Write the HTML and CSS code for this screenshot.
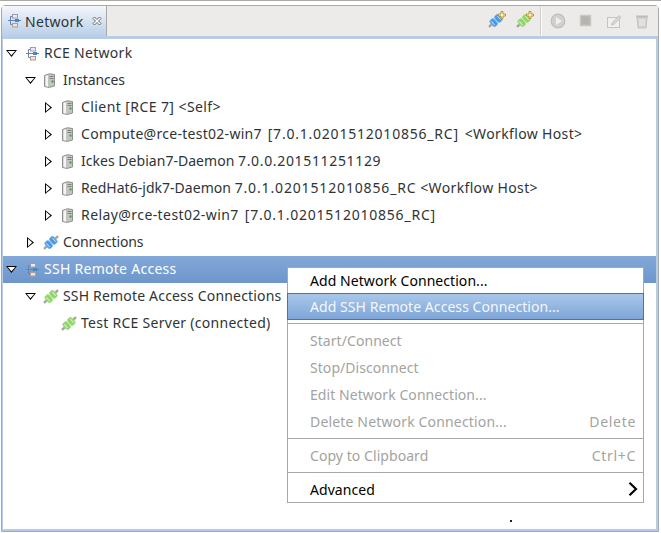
FILE: index.html
```html
<!DOCTYPE html>
<html lang="en">
<head>
  <meta charset="UTF-8" />
  <title>Network</title>
  <link rel="stylesheet" href="styles.css">
</head>
<body>

<svg class="defs" width="0" height="0">
  <symbol id="net" viewBox="0 0 16 16">
    <path d="M2 7.500H15" stroke="#5f86b8" fill="none"/>
    <path d="M4.500 3.500V11.500M4.500 3.500H6M4.500 11.500H6" stroke="#5f86b8" fill="none"/>
    <rect x="6.500" y="1.500" width="5" height="3.500" fill="#eceaf0" stroke="#a09cb0"/>
    <rect x="6.500" y="10.500" width="5" height="3.500" fill="#f0e2da" stroke="#b09c94"/>
    <rect x="9.500" y="6.500" width="3" height="2" fill="#3f8fd0" stroke="#4a84b8"/>
  </symbol>
  <symbol id="server" viewBox="0 0 16 16">
    <path d="M1.500 2.500Q6 -0.500 11.500 1.500V13Q6 15.500 1.500 13.500Z" fill="#c4c5c1" stroke="#8e908c"/>
    <path d="M2.500 3V13L5 13.800V2Z" fill="#f4f4f2"/>
    <path d="M6.500 3.500H10.500M6.500 5.500H10.500" stroke="#80827e" fill="none"/>
    <rect x="8.500" y="7.500" width="2" height="2" fill="#3c9a4a"/>
  </symbol>
  <symbol id="plug-blue" viewBox="0 0 16 16">
    <g transform="rotate(-42 8 7.500)">
      <path d="M-1.500 7.500H3M13 7.500H17.500" stroke="#a2a4a0" stroke-width="2.400" fill="none"/>
      <path d="M7 7.500H9" stroke="#d8e8f8" stroke-width="3" fill="none"/>
      <rect x="2.200" y="3.400" width="5.300" height="8.200" rx="2" fill="#4a97e4" stroke="#7fb6ee" stroke-width="0.800"/>
      <rect x="8.500" y="3.400" width="5.300" height="8.200" rx="2" fill="#4a97e4" stroke="#7fb6ee" stroke-width="0.800"/>
      <path d="M4 5V10M12 5V10" stroke="#bcdcf8" fill="none"/>
    </g>
  </symbol>
  <symbol id="plug-green" viewBox="0 0 16 16">
    <g transform="rotate(-42 8 7.500)">
      <path d="M-1.500 7.500H3M13 7.500H17.500" stroke="#a2a4a0" stroke-width="2.400" fill="none"/>
      <path d="M7 7.500H9" stroke="#eef9e6" stroke-width="3" fill="none"/>
      <rect x="2.200" y="3.400" width="5.300" height="8.200" rx="2" fill="#8ed468" stroke="#a9e08c" stroke-width="0.800"/>
      <rect x="8.500" y="3.400" width="5.300" height="8.200" rx="2" fill="#8ed468" stroke="#a9e08c" stroke-width="0.800"/>
      <path d="M4 5V10M12 5V10" stroke="#dff5cf" fill="none"/>
    </g>
  </symbol>
  <symbol id="spark" viewBox="0 0 8 8">
    <path d="M3 0.500H5V3H7.500V5H5V7.500H3V5H0.500V3H3Z" fill="#fbf3c8" stroke="#b8962e"/>
  </symbol>
</svg>

<div class="view">
  <div class="tabbar">
    <div class="tab">
      <svg class="ico"><use href="#net"/></svg>
      <span class="tab-title">Network</span>
      <svg class="tab-close" viewBox="0 0 10 10">
        <path d="M1 2.500L2.500 1L5 3.500L7.500 1L9 2.500L6.500 5L9 7.500L7.500 9L5 6.500L2.500 9L1 7.500L3.500 5Z" fill="#fff" stroke="#55575a" stroke-width="0.900"/>
      </svg>
    </div>
    <div class="toolbar">
      <span class="tool">
        <svg class="ico"><use href="#plug-blue"/></svg>
        <svg class="spark"><use href="#spark"/></svg>
      </span>
      <span class="tool">
        <svg class="ico"><use href="#plug-green"/></svg>
        <svg class="spark"><use href="#spark"/></svg>
      </span>
      <span class="tool-sep"></span>
      <svg class="tool" viewBox="0 0 16 16">
        <circle cx="8" cy="8" r="6.800" fill="#d0d0cc" stroke="#bdbdb9" stroke-width="1.200"/>
        <path d="M6 4L12 8L6 12Z" fill="#f0f0ee"/>
      </svg>
      <svg class="tool" viewBox="0 0 16 16">
        <rect x="2.500" y="2.500" width="10" height="10" fill="#b4b4b0" stroke="#c8c8c4" stroke-width="1.500"/>
      </svg>
      <svg class="tool" viewBox="0 0 16 16">
        <rect x="1.500" y="4.500" width="12" height="10" fill="#f0f0ee" stroke="#c4c4c0"/>
        <path d="M6 10L13 2.500L15 4.200L8 11.500L5.500 12Z" fill="#d8d8d4" stroke="#bcbcb8" stroke-width="0.800"/>
      </svg>
      <svg class="tool" viewBox="0 0 16 16">
        <path d="M2 3.500H14" stroke="#bdbdb9" stroke-width="2" fill="none"/>
        <path d="M3 4.500H13L12 15H4Z" fill="#d2d2ce" stroke="#c4c4c0"/>
        <path d="M6 6V13M8 6V13M10 6V13" stroke="#eeeeec" fill="none"/>
      </svg>
    </div>
  </div>

  <div class="tree">
    <div class="row lv0"><i class="tw down"></i><svg class="ico"><use href="#net"/></svg><span>RCE Network</span></div>
    <div class="row lv1"><i class="tw down"></i><svg class="ico"><use href="#server"/></svg><span class="tight">Instances</span></div>
    <div class="row lv2"><i class="tw right"></i><svg class="ico"><use href="#server"/></svg><span class="wide">Client [RCE 7] &lt;Self&gt;</span></div>
    <div class="row lv2"><i class="tw right"></i><svg class="ico"><use href="#server"/></svg><span class="gap">Compute@rce-test02-win7 <span class="ver">[7.0.1.0201512010856_RC]</span> <span class="plain">&lt;Workflow Host&gt;</span></span></div>
    <div class="row lv2"><i class="tw right"></i><svg class="ico"><use href="#server"/></svg><span class="lead">Ickes Debian7-Daemon <span class="ver short">7.0.0.201511251129</span></span></div>
    <div class="row lv2"><i class="tw right"></i><svg class="ico"><use href="#server"/></svg><span class="lead">RedHat6-jdk7-Daemon <span class="ver long">7.0.1.0201512010856_RC</span> <span class="plain">&lt;Workflow Host&gt;</span></span></div>
    <div class="row lv2"><i class="tw right"></i><svg class="ico"><use href="#server"/></svg><span class="wide gap">Relay@rce-test02-win7 <span class="ver">[7.0.1.0201512010856_RC]</span></span></div>
    <div class="row lv1"><i class="tw right"></i><svg class="ico"><use href="#plug-blue"/></svg><span class="tight">Connections</span></div>
    <div class="row lv0 selected"><i class="tw down"></i><svg class="ico"><use href="#net"/></svg><span>SSH Remote Access</span></div>
    <div class="row lv1"><i class="tw down"></i><svg class="ico"><use href="#plug-green"/></svg><span class="snug">SSH Remote Access Connections</span></div>
    <div class="row lv2"><i class="tw none"></i><svg class="ico"><use href="#plug-green"/></svg><span>Test RCE Server (connected)</span></div>
  </div>
</div>

<div class="menu">
  <div class="item first">Add Network Connection...</div>
  <div class="item hover">Add SSH Remote Access Connection...</div>
  <div class="sep"></div>
  <div class="item off">Start/Connect</div>
  <div class="item off">Stop/Disconnect</div>
  <div class="item off">Edit Network Connection...</div>
  <div class="item off"><span class="label">Delete Network Connection...</span><span class="key">Delete</span></div>
  <div class="sep"></div>
  <div class="item off"><span>Copy to Clipboard</span><span class="key">Ctrl+C</span></div>
  <div class="sep"></div>
  <div class="item last">
    <span>Advanced</span>
    <svg class="chev" viewBox="0 0 10 14"><path d="M1.500 0.800L8 7L1.500 13.200" fill="none" stroke="#000" stroke-width="2.200"/></svg>
  </div>
</div>

<div class="speck"></div>

</body>
</html>
```

FILE: styles.css
```css
html, body {
  margin: 0;
  height: 533px;
  overflow: hidden;
}

body {
  font-family: "Noto Sans", sans-serif;
  font-size: 14px;
  color: #2e3436;
  background-color: #fff;
  border-top: 1px solid #a8a8a4;
  box-sizing: border-box;
  padding: 4px 1px 0 1px;
}

.defs {
  display: block;
  height: 0;
}

.ico {
  width: 16px;
  height: 16px;
  flex: none;
  display: block;
}

.view {
  height: 527px;
  border: 1px solid #a8a8a4;
  border-radius: 4px 4px 0 0;
  box-sizing: border-box;
  display: flex;
  flex-direction: column;
  background: #fff;
  margin-right: 1px;
}

.tabbar {
  display: flex;
  height: 30px;
  flex: none;
  background-color: #ecebe9;
  border-bottom: 3px solid #b6cce9;
}

.tab {
  width: 105px;
  display: flex;
  align-items: center;
  gap: 3px;
  padding-left: 4px;
  box-sizing: border-box;
  background: linear-gradient(#f4f6fa, #b9cfe9);
  border-right: 1px solid #a8a8a4;
}

.tab-title {
  letter-spacing: 0.3px;
}

.tab-close {
  width: 10px;
  height: 10px;
  margin-left: 6px;
}

.toolbar {
  flex: 1;
  display: flex;
  align-items: center;
  justify-content: flex-end;
  gap: 12px;
  padding-right: 8px;
}

.tool {
  width: 16px;
  height: 16px;
  position: relative;
  display: block;
}

.spark {
  position: absolute;
  right: -2px;
  top: -2px;
  width: 8px;
  height: 8px;
}

.tool-sep {
  width: 1px;
  height: 28px;
  background: #fbfbfa;
  border-left: 1px solid #cfcfcb;
  margin: 0 -4px;
}

.tree {
  flex: 1;
  padding-top: 1px;
  border: 0 solid #b6cce9;
  border-width: 0 2px 2px 1px;
}

.row {
  height: 27px;
  display: flex;
  align-items: center;
  white-space: nowrap;
  letter-spacing: 0.28px;
}

.row > span {
  margin-bottom: 2px;
}

.lv0 { padding-left: 3px; }
.lv1 { padding-left: 22px; }
.lv2 { padding-left: 40px; }

.row .ico {
  margin: 0 4px 0 7px;
}

.tight { letter-spacing: -0.12px; }
.snug { letter-spacing: 0.18px; }
.wide { letter-spacing: 0.42px; }
.lead { letter-spacing: 0.03px; }
.gap { word-spacing: 2px; }
.ver { letter-spacing: 0.78px; }
.ver.short { letter-spacing: 0.66px; }
.ver.long { letter-spacing: 0.85px; }
.plain { letter-spacing: 0.36px; word-spacing: 0; }

.selected {
  background: linear-gradient(#82a8d8, #6d96cb);
  color: #fff;
}

/* tree arrows */
.tw {
  width: 11px;
  height: 11px;
  flex: none;
  position: relative;
}

.tw.down {
  clip-path: polygon(0 18%, 100% 18%, 50% 82%);
  background: #000;
}

.tw.down::after {
  content: "";
  position: absolute;
  inset: 0;
  background: #fff;
  clip-path: polygon(16% 27%, 84% 27%, 50% 66%);
}

.tw.right {
  clip-path: polygon(18% 0, 82% 50%, 18% 100%);
  background: #000;
}

.tw.right::after {
  content: "";
  position: absolute;
  inset: 0;
  background: #fff;
  clip-path: polygon(28% 17%, 66% 50%, 28% 83%);
}

.menu {
  position: absolute;
  left: 287px;
  top: 267px;
  width: 357px;
  height: 236px;
  box-sizing: border-box;
  border: 1px solid #a8a8a4;
  background: #fff;
  color: #000;
  letter-spacing: 0.06px;
}

.item {
  height: 27px;
  box-sizing: border-box;
  padding: 0 7px 0 22px;
  display: flex;
  align-items: center;
  justify-content: space-between;
}

.item.first {
  height: 25px;
}

.item.last {
  height: 26px;
}

.item.hover {
  margin: 0 -1px;
  color: #f4f7fb;
  background: linear-gradient(#a9c7e9, #7ea6d9);
  border: 1px solid #4a74a8;
}

.item.off {
  color: #a3a3a0;
}

.label {
  letter-spacing: 0.16px;
}

.key {
  letter-spacing: 0.7px;
}

.sep {
  height: 1px;
  background: #a8a8a4;
  margin: 3px 0;
}

.chev {
  width: 10px;
  height: 14px;
  margin-right: -2px;
}

.speck {
  position: absolute;
  left: 510px;
  top: 520px;
  width: 2px;
  height: 2px;
  background: #222;
}
```
